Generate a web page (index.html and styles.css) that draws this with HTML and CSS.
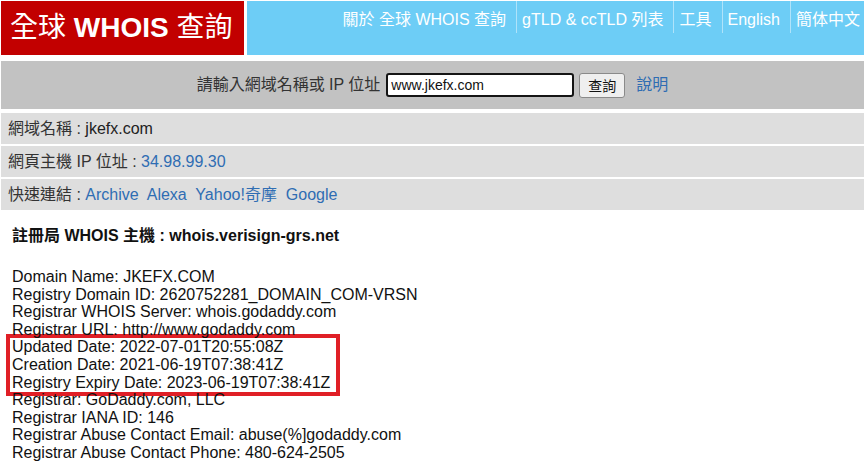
FILE: index.html
```html
<!DOCTYPE html>
<html lang="zh-Hant">
<head>
<meta charset="utf-8">
<title>全球 WHOIS 查詢</title>
<link rel="stylesheet" href="styles.css">
</head>
<body>
<div class="page">
  <header class="header">
    <div class="logo"><span class="logo-text"><span class="cjk">全球</span> <b>WHOIS</b> <span class="cjk">查詢</span></span></div>
    <nav class="nav">
      <a class="nav-item first" href="#">關於 全球 WHOIS 查詢</a>
      <a class="nav-item" href="#">gTLD &amp; ccTLD 列表</a>
      <a class="nav-item" href="#">工具</a>
      <a class="nav-item" href="#">English</a>
      <a class="nav-item last" href="#">簡体中文</a>
    </nav>
  </header>

  <form class="search">
    <label class="search-label" for="q">請輸入網域名稱或 IP 位址</label>
    <input class="search-input" id="q" type="text" value="www.jkefx.com">
    <button class="search-btn" type="button">查詢</button>
    <a class="search-help" href="#">說明</a>
  </form>

  <div class="info">
    <div class="info-row"><span>網域名稱 : <span class="val">jkefx.com</span></span></div>
    <div class="info-row"><span>網頁主機 IP 位址 : <a class="lnk" href="#">34.98.99.30</a></span></div>
    <div class="info-row"><span>快速連結 : <a class="lnk" href="#">Archive</a>&nbsp; <a class="lnk" href="#">Alexa</a>&nbsp; <a class="lnk" href="#">Yahoo!奇摩</a>&nbsp; <a class="lnk" href="#">Google</a></span></div>
  </div>

  <div class="registry">註冊局 WHOIS 主機 : whois.verisign-grs.net</div>

  <div class="whois">
    <div>Domain Name: JKEFX.COM</div>
    <div>Registry Domain ID: 2620752281_DOMAIN_COM-VRSN</div>
    <div>Registrar WHOIS Server: whois.godaddy.com</div>
    <div>Registrar URL: http://www.godaddy.com</div>
    <div class="highlight">
      <div>Updated Date: 2022-07-01T20:55:08Z</div>
      <div>Creation Date: 2021-06-19T07:38:41Z</div>
      <div>Registry Expiry Date: 2023-06-19T07:38:41Z</div>
    </div>
    <div>Registrar: GoDaddy.com, LLC</div>
    <div>Registrar IANA ID: 146</div>
    <div>Registrar Abuse Contact Email: abuse(%]godaddy.com</div>
    <div>Registrar Abuse Contact Phone: 480-624-2505</div>
  </div>
</div>
</body>
</html>
```

FILE: styles.css
```css
html, body {
  margin: 0;
  padding: 0;
  background: #ffffff;
}

body {
  font-family: "Liberation Sans", Arial, "Noto Sans CJK TC", sans-serif;
  font-size: 16px;
  color: #222222;
  overflow: hidden;
}

.page {
  padding: 1px 2px 0 1px;
}

.header {
  display: flex;
  gap: 3px;
  height: 54px;
}

.logo {
  width: 234px;
  padding-left: 9px;
  background: #c20000;
  color: #ffffff;
  font-size: 28px;
  line-height: 32px;
  display: flex;
  align-items: center;
}

.logo-text {
  white-space: pre;
}

.logo b {
  font-weight: bold;
}

.logo .cjk {
  font-weight: normal;
}

.nav {
  flex: 1;
  background: #6dcdf6;
  display: flex;
  justify-content: flex-end;
  align-items: flex-start;
}

.nav-item {
  color: #ffffff;
  text-decoration: none;
  line-height: 18px;
  padding: 10px 10px 4px 5px;
  border-left: 1px solid rgba(255, 255, 255, 0.45);
  white-space: nowrap;
}

.nav-item.first {
  border-left: 0;
}

.nav-item.last {
  padding-right: 4px;
}

.search {
  margin: 6px 0 0 0;
  height: 48px;
  background: #c2c2c2;
  display: flex;
  align-items: center;
  justify-content: center;
  color: #333333;
}

.search-label {
  line-height: 18px;
  margin-right: 6px;
}

.search-input {
  width: 181px;
  height: 20px;
  padding: 0 0 0 3px;
  margin: 0;
  border: 2px solid #151515;
  border-radius: 3px;
  background: #ffffff;
  font-family: "Liberation Sans", Arial, sans-serif;
  font-size: 14px;
  color: #111111;
  box-sizing: content-box;
}

.search-btn {
  margin-left: 5px;
  width: 46px;
  height: 25px;
  padding: 0;
  border: 1px solid #8a8a8a;
  border-radius: 3px;
  background: #efefef;
  font-family: "Noto Sans CJK TC", sans-serif;
  font-size: 14px;
  color: #111111;
}

.search-help {
  margin-left: 11px;
  color: #2f6db3;
  text-decoration: none;
  line-height: 18px;
}

.info {
  margin-top: 4px;
  display: flex;
  flex-direction: column;
  gap: 2px;
}

.info-row {
  height: 31px;
  background: #dedede;
  color: #333333;
  padding-left: 7px;
  display: flex;
  align-items: center;
  line-height: 18px;
}

.info-row .val {
  color: #222222;
}

.lnk {
  color: #2f6db3;
  text-decoration: none;
}

.registry {
  margin: 17px 0 0 11px;
  font-size: 16px;
  font-weight: bold;
  line-height: 18px;
  color: #111111;
}

.whois {
  margin: 23px 0 0 11px;
  line-height: 17.6px;
  color: #111111;
}

.highlight {
  width: fit-content;
  border: 4px solid #e01f26;
  margin: -4px 0 -5px -6px;
  padding: 0 6px 1px 2px;
}
```
